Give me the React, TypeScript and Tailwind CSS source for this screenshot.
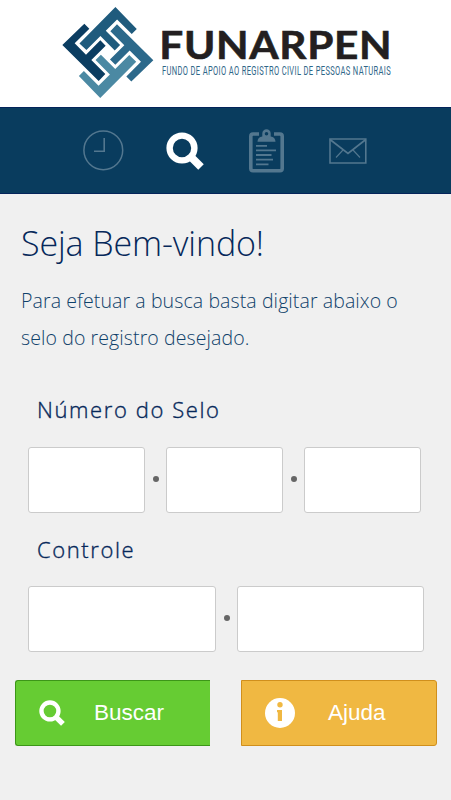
import type { ReactNode } from 'react';

const BLADE = 'M22 135L88 71L103 86L59 130L93 164L136 121L152 137L109 180L151 222L131 243Z';

function Logo() {
  return (
    <svg width="451" height="107" viewBox="0 0 451 107" role="img">
      <g transform="translate(55 0) scale(0.3333)">
        <path d={BLADE} fill="#0b3d61" />
        <path d={BLADE} fill="#1f5b7d" transform="rotate(90 158.5 157.8)" />
        <path d={BLADE} fill="#2c698b" transform="rotate(180 158.5 157.8)" />
        <path d={BLADE} fill="#4b89a3" transform="rotate(270 158.5 157.8)" />
      </g>
      <text
        x="159.3"
        y="59.3"
        textLength="233"
        lengthAdjust="spacingAndGlyphs"
        fill="#231f20"
        stroke="#231f20"
        strokeWidth="0.6"
        className="font-['Lato',sans-serif] text-[39px] font-bold tracking-[0.6px]"
      >
        FUNARPEN
      </text>
      <text
        x="162"
        y="74.6"
        textLength="229"
        lengthAdjust="spacingAndGlyphs"
        fill="#2f6688"
        className="font-['Roboto',sans-serif] text-[13.2px] tracking-[0.6px]"
      >
        FUNDO DE APOIO AO REGISTRO CIVIL DE PESSOAS NATURAIS
      </text>
    </svg>
  );
}

function SearchIcon({ className }: { className: string }) {
  return (
    <svg className={className} viewBox="0 0 38 38" fill="none" stroke="currentColor">
      <circle cx="16" cy="16" r="12.4" strokeWidth="6.4" />
      <path d="M24.5 24.5L35 35" strokeWidth="7.8" />
    </svg>
  );
}

function NavBar() {
  return (
    <nav className="flex h-[87px] items-center border-y border-[#04245a] bg-[#093c5e] pl-[83px] text-[#53778f]">
      <svg className="mr-[42px] size-[41px]" viewBox="0 0 41 41" fill="none" stroke="currentColor">
        <circle cx="20.3" cy="20.3" r="19.4" strokeWidth="1.5" />
        <path d="M21.2 8V21.3H11" strokeWidth="1.6" />
      </svg>
      <SearchIcon className="mr-[45px] size-[38px] text-white" />
      <svg className="mr-[46px] h-[44px] w-[35px]" viewBox="0 0 35 44" fill="none">
        <path
          d="M10 5H4Q1.8 5 1.8 7.2V39.5Q1.8 41.7 4 41.7H31Q33.2 41.7 33.2 39.5V7.2Q33.2 5 31 5H25"
          stroke="currentColor"
          strokeWidth="3.6"
        />
        <path
          fill="currentColor"
          fillRule="evenodd"
          d="M8.5 12.8C8.5 9.5 10.5 8 13.3 7.5V4.5A4.2 4.2 0 0 1 21.7 4.5V7.5C24.5 8 26.5 9.5 26.5 12.8ZM17.5 3A1.8 1.8 0 1 0 17.5 6.6A1.8 1.8 0 1 0 17.5 3Z"
        />
        <path
          d="M7 16.8H18M7 21.4H27M7 26H22.5M7 30.7H24M7 35.3H19.5"
          stroke="currentColor"
          strokeWidth="1.8"
        />
      </svg>
      <svg className="-ml-px h-[26px] w-[38px]" viewBox="0 0 38 26" fill="none" stroke="currentColor">
        <path d="M1 1H36.8V25H1Z" strokeWidth="1.6" />
        <path d="M1 1.5L19 15.5L36.8 1.5" strokeWidth="1.7" />
        <path d="M7 19.5L14 12M24 12L31 19.5" strokeWidth="1.1" />
      </svg>
    </nav>
  );
}

function SectionLabel({ className, children }: { className: string; children: ReactNode }) {
  return (
    <h2
      className={`pl-[37px] text-[22px] leading-[32px] font-light tracking-[1.6px] text-[#06285a] [-webkit-text-stroke:0.35px_#06285a] ${className}`}
    >
      {children}
    </h2>
  );
}

function Field({ className, label }: { className: string; label: string }) {
  return (
    <input
      type="text"
      aria-label={label}
      className={`h-[66px] rounded-[3px] border border-[#cbcbcb] bg-white px-3 text-xl outline-none ${className}`}
    />
  );
}

function Dot() {
  return <span className="mb-[2px] size-[6px] rounded-full bg-[#666]" />;
}

function ActionButton({ className, children }: { className: string; children: ReactNode }) {
  return (
    <button
      className={`flex h-[66px] items-center border font-['Liberation_Sans',Arial,sans-serif] text-[22.5px] text-white ${className}`}
    >
      {children}
    </button>
  );
}

export default function App() {
  return (
    <div className="h-[800px] w-[451px] overflow-hidden bg-[#f0f0f0] font-['Open_Sans',sans-serif] text-[#0f416a]">
      <header className="h-[107px] bg-white">
        <Logo />
      </header>
      <NavBar />

      <main className="pt-[26px]">
        <div className="pl-[21px] font-light">
          <h1 className="text-[34px] leading-[46px] tracking-[-0.1px] whitespace-nowrap text-[#06285a]">Seja Bem-vindo!</h1>
          <p className="mt-[16px] text-[19.5px] leading-[37px] tracking-[0.1px] whitespace-nowrap">
            Para efetuar a busca basta digitar abaixo o
            <br />
            selo do registro desejado.
          </p>
        </div>

        <SectionLabel className="mt-[37px]">Número do Selo</SectionLabel>
        <div className="mt-[22px] ml-[28px] flex w-[393px] items-center justify-between">
          <Field className="w-[117px]" label="Selo 1" />
          <Dot />
          <Field className="w-[117px]" label="Selo 2" />
          <Dot />
          <Field className="w-[117px]" label="Selo 3" />
        </div>

        <SectionLabel className="mt-[20px]">Controle</SectionLabel>
        <div className="mt-[21px] ml-[28px] flex w-[396px] items-center justify-between">
          <Field className="w-[188px]" label="Controle 1" />
          <Dot />
          <Field className="w-[187px]" label="Controle 2" />
        </div>

        <div className="mt-[28px] ml-[15px] flex justify-between pr-[14px]">
          <ActionButton className="w-[195px] rounded-l-[3px] border-r-0 border-[#3c9618] bg-[#66cc33] pl-[23px]">
            <SearchIcon className="mr-[29px] size-[26px]" />
            Buscar
          </ActionButton>
          <ActionButton className="w-[196px] rounded-r-[3px] border-[#d08f1c] bg-[#f0b842] pl-[23px]">
            <svg className="mr-[33px] size-[30px]" viewBox="0 0 30 30">
              <circle cx="15" cy="15" r="15" fill="white" />
              <circle cx="15" cy="6.8" r="2.7" fill="#f0b842" />
              <path d="M12 12H17V23H12.8V14.2H12Z" fill="#f0b842" />
            </svg>
            Ajuda
          </ActionButton>
        </div>
      </main>
    </div>
  );
}
